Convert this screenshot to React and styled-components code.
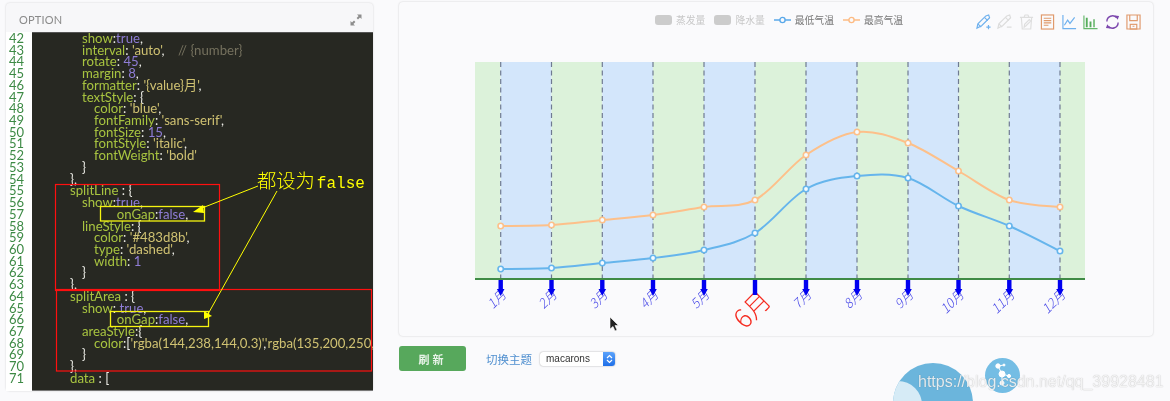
import React from "react";
import styled, { createGlobalStyle } from "styled-components";

const GlobalStyle = createGlobalStyle`
  html, body {
    margin: 0;
    padding: 0;
    height: 401px;
    overflow: hidden;
    background: #fafafc;
    font-family: "Noto Sans CJK SC", "Noto Sans", sans-serif;
  }
`;

const code = [
  [42, 2, [["k", "show"], ["p", ":"], ["n", "true"], ["p", ","]]],
  [43, 2, [["k", "interval"], ["p", ": "], ["s", "'auto'"], ["p", ",    "], ["c", "// {number}"]]],
  [44, 2, [["k", "rotate"], ["p", ": "], ["n", "45"], ["p", ","]]],
  [45, 2, [["k", "margin"], ["p", ": "], ["n", "8"], ["p", ","]]],
  [46, 2, [["k", "formatter"], ["p", ": "], ["s", "'{value}月'"], ["p", ","]]],
  [47, 2, [["k", "textStyle"], ["p", ": {"]]],
  [48, 3, [["k", "color"], ["p", ": "], ["s", "'blue'"], ["p", ","]]],
  [49, 3, [["k", "fontFamily"], ["p", ": "], ["s", "'sans-serif'"], ["p", ","]]],
  [50, 3, [["k", "fontSize"], ["p", ": "], ["n", "15"], ["p", ","]]],
  [51, 3, [["k", "fontStyle"], ["p", ": "], ["s", "'italic'"], ["p", ","]]],
  [52, 3, [["k", "fontWeight"], ["p", ": "], ["s", "'bold'"]]],
  [53, 2, [["p", "}"]]],
  [54, 1, [["p", "},"]]],
  [55, 1, [["k", "splitLine"], ["p", " : {"]]],
  [56, 2, [["k", "show"], ["p", ":"], ["n", "true"], ["p", ","]]],
  [57, 4.9, [["k", "onGap"], ["p", ":"], ["n", "false"], ["p", ","]]],
  [58, 2, [["k", "lineStyle"], ["p", ": {"]]],
  [59, 3, [["k", "color"], ["p", ": "], ["s", "'#483d8b'"], ["p", ","]]],
  [60, 3, [["k", "type"], ["p", ": "], ["s", "'dashed'"], ["p", ","]]],
  [61, 3, [["k", "width"], ["p", ": "], ["n", "1"]]],
  [62, 2, [["p", "}"]]],
  [63, 1, [["p", "},"]]],
  [64, 1, [["k", "splitArea"], ["p", " : {"]]],
  [65, 2, [["k", "show"], ["p", ": "], ["n", "true"], ["p", ","]]],
  [66, 4.9, [["k", "onGap"], ["p", ":"], ["n", "false"], ["p", ","]]],
  [67, 2, [["k", "areaStyle"], ["p", ":{"]]],
  [68, 3, [["k", "color"], ["p", ":["], ["s", "'rgba(144,238,144,0.3)'"], ["p", ","], ["s", "'rgba(135,200,250,0.3)'"], ["p", "]"]]],
  [69, 2, [["p", "}"]]],
  [70, 1, [["p", "},"]]],
  [71, 1, [["k", "data"], ["p", " : ["]]],
];

const tokenColors = { k: "#a8c440", p: "#ecece6", s: "#d0c272", n: "#8f7dd6", c: "#75715e" };

const Page = styled.div`
  display: flex;
  gap: 26px;
  height: 401px;
  padding: 3px 17px 0 6px;
  box-sizing: border-box;
  position: relative;
  overflow: hidden;
  filter: blur(0.4px);
`;

const OptionPanel = styled.section`
  width: 367px;
  height: 388px;
  flex: none;
  background: #f7f7f9;
  border-radius: 4px;
  box-shadow: 0 0 2px rgba(0, 0, 0, 0.18);
  display: flex;
  flex-direction: column;
`;

const OptionHeader = styled.header`
  height: 29px;
  flex: none;
  display: flex;
  align-items: center;
  justify-content: space-between;
  padding: 4px 11px 0 13px;
  box-sizing: border-box;
  color: #8a8a8a;
  font: 11px "Lato", sans-serif;
  letter-spacing: 0.2px;
`;

const CodeArea = styled.div`
  display: flex;
  flex: 1;
  min-height: 0;
`;

const Gutter = styled.div`
  width: 26px;
  flex: none;
  padding: 1px 0 0 3px;
  box-sizing: border-box;
  background: #fff;
  color: #3d8a45;
  font: 13px/11.72px "Lato", sans-serif;
`;

const Code = styled.div`
  flex: 1;
  min-width: 0;
  position: relative;
  background: #272822;
  border-top: 1px solid #555;
  border-bottom: 1px solid #777;
  overflow: hidden;
  font: 13.2px/11.72px "Lato", "Noto Sans CJK SC", sans-serif;
  white-space: pre;
`;

const CodeLine = styled.div`
  height: 11.72px;
  padding-left: ${(p) => p.$indent * 12 + 26}px;
`;

const Token = styled.span`
  color: ${(p) => tokenColors[p.$type]};
`;

const Overlay = styled.svg`
  position: absolute;
  left: 0;
  top: 0;
  pointer-events: none;
`;

const Note = styled.span`
  position: absolute;
  left: 257px;
  top: 169px;
  color: #ffff00;
  font: 16px/22px "Liberation Mono", monospace;
  white-space: nowrap;
`;

const NoteCjk = styled.span`
  margin-right: 2px;
  font: 300 19.3px/22px "Noto Sans CJK SC", sans-serif;
`;

const ChartColumn = styled.div`
  flex: 1;
  min-width: 0;
  display: flex;
  flex-direction: column;
`;

const ChartPanel = styled.section`
  height: 334px;
  flex: none;
  margin-top: -1px;
  background: #fafafc;
  border-radius: 4px;
  box-shadow: 0 0 2px rgba(0, 0, 0, 0.2);
  position: relative;
  overflow: hidden;
`;

const ChartCanvas = styled.svg`
  display: block;
`;

const Legend = styled.div`
  position: absolute;
  left: 256px;
  top: 11px;
  display: flex;
  align-items: center;
  gap: 9px;
  font-size: 9.8px;
  line-height: 14px;
`;

const LegendItem = styled.div`
  display: flex;
  align-items: center;
  gap: 4px;
  color: ${(p) => (p.$off ? "#c8c8c8" : "#777")};
`;

const LegendSwatch = styled.i`
  width: 17px;
  height: 10px;
  border-radius: 3px;
  background: #ccc;
`;

const Toolbox = styled.div`
  position: absolute;
  right: 12px;
  top: 12px;
  display: flex;
  gap: 6.5px;
`;

const Controls = styled.div`
  display: flex;
  align-items: center;
  height: 25px;
  margin-top: 10px;
`;

const RefreshButton = styled.button`
  width: 67px;
  height: 25px;
  border: 0;
  border-radius: 3px;
  padding: 0;
  background: #57a85c;
  color: #e8f3e8;
  font: bold 11px "Noto Sans CJK SC", sans-serif;
  letter-spacing: 3px;
`;

const ThemeLabel = styled.label`
  margin-left: 20px;
  color: #4f8fcf;
  font-size: 11.5px;
`;

const ThemeSelect = styled.div`
  margin-left: 8px;
  width: 75px;
  height: 14px;
  border-radius: 3px;
  background: #fff;
  box-shadow: 0 0 1.5px rgba(0, 0, 0, 0.45);
  color: #333;
  font: 10px/14px "Liberation Sans", sans-serif;
  padding-left: 6px;
  box-sizing: border-box;
  position: relative;
`;

const SelectStepper = styled.span`
  position: absolute;
  right: 0;
  top: 0;
  width: 12px;
  height: 14px;
  border-radius: 0 3px 3px 0;
  background: linear-gradient(#5aa2fb, #1f6fe8);
  display: flex;
  align-items: center;
  justify-content: center;
`;

const BigBubble = styled.div`
  position: absolute;
  left: 893px;
  top: 363px;
  width: 80px;
  height: 80px;
  border-radius: 50%;
  background: #6bb5dc;
  overflow: hidden;
`;

const BubbleHighlight = styled.div`
  position: absolute;
  left: -19px;
  top: 18px;
  width: 48px;
  height: 48px;
  border-radius: 50%;
  background: #d6ebf6;
`;

const SmallBubble = styled.div`
  position: absolute;
  left: 985px;
  top: 358px;
  width: 35px;
  height: 35px;
  border-radius: 50%;
  background: #74bde4;
  display: flex;
  align-items: center;
  justify-content: center;
`;

const Watermark = styled.span`
  position: absolute;
  left: 918px;
  top: 372px;
  color: rgba(255, 255, 255, 0.85);
  font: 16px/20px "Liberation Sans", sans-serif;
  text-shadow: 0 0 1px rgba(0, 0, 0, 0.35);
  white-space: nowrap;
`;

const Cursor = styled.svg`
  position: absolute;
  left: 609px;
  top: 316px;
`;

const bands = [475, 500.7, 551.5, 602.3, 653, 704, 755, 806, 857, 908, 958.5, 1009.3, 1060, 1085];
const ticks = bands.slice(1, 13);
const low = [269, 268, 263, 258, 250, 233, 189, 176, 178, 206, 226, 251];
const high = [226, 225, 220, 215, 207, 200, 155, 132, 143, 171, 200, 207];

// smooth line through the points, same look as echarts smooth:true
const smoothPath = (ys) => {
  const pts = ys.map((y, i) => [ticks[i], y]);
  let d = `M${pts[0][0]} ${pts[0][1]}`;
  for (let i = 0; i < pts.length - 1; i++) {
    const p0 = pts[Math.max(i - 1, 0)];
    const p1 = pts[i];
    const p2 = pts[i + 1];
    const p3 = pts[Math.min(i + 2, pts.length - 1)];
    const c1 = [p1[0] + (p2[0] - p0[0]) / 6, p1[1] + (p2[1] - p0[1]) / 6];
    const c2 = [p2[0] - (p3[0] - p1[0]) / 6, p2[1] - (p3[1] - p1[1]) / 6];
    d += ` C${c1[0]} ${c1[1]} ${c2[0]} ${c2[1]} ${p2[0]} ${p2[1]}`;
  }
  return d;
};

const Series = ({ ys, color }) => (
  <g>
    <path d={smoothPath(ys)} fill="none" stroke={color} strokeWidth="2" />
    {ys.map((y, i) => (
      <circle key={i} cx={ticks[i]} cy={y} r="2.7" fill="#f6fbff" stroke={color} strokeWidth="1.6" />
    ))}
  </g>
);

// viewBox keeps the chart in screenshot coordinates
const Chart = () => (
  <ChartCanvas width="754" height="334" viewBox="399 2 754 334">
    {bands.slice(0, -1).map((x, i) => (
      <rect key={x} x={x} y="62" width={bands[i + 1] - x} height="217" fill={i % 2 ? "#d3e6fb" : "#dcf2da"} />
    ))}
    {ticks.map((x) => (
      <line key={x} x1={x} x2={x} y1="62" y2="279" stroke="#6f7a92" strokeWidth="1.2" strokeDasharray="5 3.5" />
    ))}
    <Series ys={high} color="#fdc08a" />
    <Series ys={low} color="#66b5ec" />
    <line x1="475" x2="1085" y1="279" y2="279" stroke="#3f8b45" strokeWidth="2" />
    {ticks.map((x, i) =>
      i === 5 ? (
        <text
          key={x}
          transform={`translate(${x + 1} 285) rotate(-45)`}
          textAnchor="end"
          fontSize="26"
          fill="#f52b20"
          fontFamily="'Noto Sans CJK SC', sans-serif"
          dominantBaseline="hanging"
          fontWeight="300"
        >
          6月
        </text>
      ) : (
        <text
          key={x}
          transform={`translate(${x - 2} 287) rotate(-45)`}
          textAnchor="end"
          fontSize="13"
          fontStyle="italic"
          fill="#4a4ae8"
          fontFamily="'Noto Sans CJK SC', 'Noto Sans', sans-serif"
          fontWeight="300"
          dominantBaseline="hanging"
        >
          {i + 1}月
        </text>
      )
    )}
    {ticks.map((x, i) => (
      <g key={x}>
        <rect x={x - 2.2} y="280" width="4.4" height={i === 5 ? 15 : 11} fill="#0000f0" />
        {i !== 5 && <path d={`M${x - 3.8} 289 L${x + 3.8} 289 L${x} 296 Z`} fill="#0000f0" />}
      </g>
    ))}
  </ChartCanvas>
);

const ExpandIcon = () => (
  <svg width="12" height="12" viewBox="0 0 12 12" fill="#8d8d8d">
    <path d="M7 0.5 L11.5 0.5 L11.5 5 L10 3.4 L8 5.4 L6.6 4 L8.6 2 Z" />
    <path d="M5 11.5 L0.5 11.5 L0.5 7 L2 8.6 L4 6.6 L5.4 8 L3.4 10 Z" />
  </svg>
);

const ToolIcon = ({ children }) => (
  <svg width="15" height="16" viewBox="0 0 16 17" fill="none" strokeWidth="1.25">
    {children}
  </svg>
);

const Icons = () => (
  <Toolbox>
    <ToolIcon>
      <g stroke="#6fb1ee">
        <path d="M1 15 L2 10.5 L10.5 2 L13.5 1 L14.5 4 L6 12.5 Z" />
        <path d="M9 3.5 L12.5 7 M2 10.5 L5.5 14" />
        <path d="M11 14 H15.5 M13.3 11.8 V16.2" />
      </g>
    </ToolIcon>
    <ToolIcon>
      <g stroke="#dcdcdc">
        <path d="M1 15 L2 10.5 L10.5 2 L13.5 1 L14.5 4 L6 12.5 Z" />
        <path d="M9 3.5 L12.5 7 M2 10.5 L5.5 14" />
        <path d="M10.5 14 H15.5" />
      </g>
    </ToolIcon>
    <ToolIcon>
      <g stroke="#dedede">
        <path d="M2.5 4 L3.5 16 H12.5 L13.5 4" />
        <path d="M1 3.5 H15 M5.5 3 L6.5 1 H9.5 L10.5 3" />
        <path d="M5.5 14 L6 11 L11 6 L12.5 7.5 L7.5 12.5 Z" />
      </g>
    </ToolIcon>
    <ToolIcon>
      <g stroke="#e09a6c">
        <rect x="1.5" y="1" width="13" height="15" />
        <path d="M4 4.5 H12 M4 7 H12 M4 9.5 H12 M4 12 H9" />
      </g>
    </ToolIcon>
    <ToolIcon>
      <g stroke="#6fb1ee">
        <path d="M1 1 V15.5 H15" />
        <path d="M2.5 12 L6 6.5 L8.5 10 L13.5 3.5" />
      </g>
    </ToolIcon>
    <ToolIcon>
      <path d="M1 1.5 V15.5 H15.5" stroke="#66b86b" />
      <path d="M3 14 V4 H5 V14 Z M7 14 V8 H9 V14 Z M11 14 V5.5 H12.5 V14 Z" fill="#55ad5b" />
    </ToolIcon>
    <ToolIcon>
      <g stroke="#7d48ae" strokeWidth="1.5">
        <path d="M2 8 A6 6 0 0 1 12.5 4" />
        <path d="M14 9 A6 6 0 0 1 3.5 13" />
      </g>
      <path d="M10.5 1.5 L15 2 L13.5 6 Z M5.5 15.5 L1 15 L2.5 11 Z" fill="#7d48ae" />
    </ToolIcon>
    <ToolIcon>
      <g stroke="#e09a6c">
        <path d="M1 1 H15 V16 H1 Z" />
        <path d="M4 1 V7 H12 V1" />
        <rect x="4.5" y="11" width="7" height="5" />
        <path d="M7 13 H9" />
      </g>
    </ToolIcon>
  </Toolbox>
);

const Arrows = () => (
  <Overlay width="341" height="351">
    {/* coordinates are relative to the code box at 32,33 */}
    <rect x="23.5" y="151.5" width="164" height="106" fill="none" stroke="#ff1010" strokeWidth="1.2" />
    <rect x="24.5" y="256.5" width="315" height="81.5" fill="none" stroke="#ff1010" strokeWidth="1.2" />
    <rect x="68.5" y="173.5" width="104" height="14.5" fill="none" stroke="#f6f410" strokeWidth="1.3" />
    <rect x="78.5" y="278.5" width="98" height="15" fill="none" stroke="#f6f410" strokeWidth="1.3" />
    <path d="M226 153 L165 177" stroke="#ffff00" fill="none" />
    <path d="M161 179 L171 172 L172 180 Z" fill="#ffff00" />
    <path d="M245 158 L176 281" stroke="#ffff00" fill="none" />
    <path d="M172 286 L172 278 L180 283 Z" fill="#ffff00" />
  </Overlay>
);

export default function App() {
  return (
    <>
      <GlobalStyle />
      <Page>
        <OptionPanel>
          <OptionHeader>
            OPTION
            <ExpandIcon />
          </OptionHeader>
          <CodeArea>
            <Gutter>
              {code.map(([n]) => (
                <div key={n}>{n}</div>
              ))}
            </Gutter>
            <Code>
              {code.map(([n, indent, tokens]) => (
                <CodeLine key={n} $indent={indent}>
                  {tokens.map(([type, text], i) => (
                    <Token key={i} $type={type}>
                      {text}
                    </Token>
                  ))}
                </CodeLine>
              ))}
              <Arrows />
            </Code>
          </CodeArea>
        </OptionPanel>
        <ChartColumn>
          <ChartPanel>
            <Chart />
            <Legend>
              <LegendItem $off>
                <LegendSwatch />
                蒸发量
              </LegendItem>
              <LegendItem $off>
                <LegendSwatch />
                降水量
              </LegendItem>
              <LegendItem>
                <svg width="17" height="8" viewBox="0 0 17 8">
                  <path d="M0 4 H17" stroke="#5aa9ea" strokeWidth="1.4" />
                  <circle cx="8.5" cy="4" r="2.6" fill="#fafafc" stroke="#5aa9ea" strokeWidth="1.4" />
                </svg>
                最低气温
              </LegendItem>
              <LegendItem>
                <svg width="17" height="8" viewBox="0 0 17 8">
                  <path d="M0 4 H17" stroke="#fdbb84" strokeWidth="1.4" />
                  <circle cx="8.5" cy="4" r="2.6" fill="#fafafc" stroke="#fdbb84" strokeWidth="1.4" />
                </svg>
                最高气温
              </LegendItem>
            </Legend>
            <Icons />
          </ChartPanel>
          <Controls>
            <RefreshButton>刷新</RefreshButton>
            <ThemeLabel>切换主题</ThemeLabel>
            <ThemeSelect>
              macarons
              <SelectStepper>
                <svg width="7" height="10" viewBox="0 0 7 10" fill="none" stroke="#fff" strokeWidth="1.2">
                  <path d="M1 4 L3.5 1.5 L6 4 M1 6 L3.5 8.5 L6 6" />
                </svg>
              </SelectStepper>
            </ThemeSelect>
          </Controls>
        </ChartColumn>
        <Note>
          <NoteCjk>都设为</NoteCjk>false
        </Note>
        <BigBubble>
          <BubbleHighlight />
        </BigBubble>
        <SmallBubble>
          <svg width="22" height="26" viewBox="0 0 22 26" fill="#fff" stroke="#fff">
            <path d="M6 3 L10 11 L10 20 M6 3 L12 2 M10 11 L17 13" strokeWidth="1" fill="none" />
            <circle cx="6" cy="3" r="2.2" />
            <circle cx="12" cy="2" r="1" />
            <circle cx="10" cy="11" r="3" />
            <circle cx="17" cy="13" r="1.6" />
            <circle cx="10" cy="20" r="2" />
          </svg>
        </SmallBubble>
        <Watermark>https://blog.csdn.net/qq_39928481</Watermark>
        <Cursor width="10" height="16" viewBox="0 0 10 16">
          <path d="M1 1 V13 L4 10.5 L6 15 L8 14 L6 9.5 H9.5 Z" fill="#222" stroke="#fff" strokeWidth="0.6" />
        </Cursor>
      </Page>
    </>
  );
}
